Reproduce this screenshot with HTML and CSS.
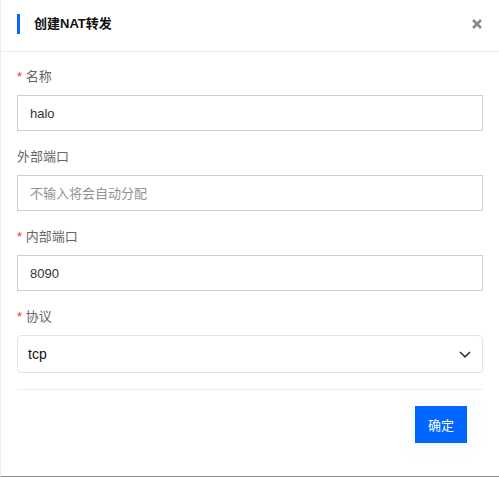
FILE: index.html
```html
<!DOCTYPE html>
<html lang="zh-CN">
<head>
<meta charset="utf-8">
<title>创建NAT转发</title>
<link rel="stylesheet" href="styles.css">
</head>
<body>
<div class="modal">
  <div class="modal-header">
    <h2 class="modal-title">创建NAT转发</h2>
    <button class="close" type="button" aria-label="关闭">
      <svg width="10" height="10" viewBox="0 0 10 10"><path d="M1 1L9 9M9 1L1 9" stroke="#8a8a8a" stroke-width="2.6" stroke-linecap="butt"/></svg>
    </button>
  </div>
  <form class="modal-body">
    <div class="field">
      <label class="label"><span class="req">*</span> 名称</label>
      <input class="input" type="text" value="halo">
    </div>
    <div class="field">
      <label class="label">外部端口</label>
      <input class="input" type="text" placeholder="不输入将会自动分配">
    </div>
    <div class="field">
      <label class="label"><span class="req">*</span> 内部端口</label>
      <input class="input" type="text" value="8090">
    </div>
    <div class="field">
      <label class="label"><span class="req">*</span> 协议</label>
      <div class="select">
        <span class="select-value">tcp</span>
        <svg class="chevron" width="12" height="7" viewBox="0 0 12 7"><path d="M1 1L6 5.8L11 1" fill="none" stroke="#333" stroke-width="1.6"/></svg>
      </div>
    </div>
    <div class="footer">
      <button class="btn-primary" type="button">确定</button>
    </div>
  </form>
</div>
</body>
</html>
```

FILE: styles.css
```css
* { box-sizing: border-box; }

html, body {
  margin: 0;
  padding: 0;
  background: #fff;
}

body {
  font-family: "Liberation Sans", "Noto Sans CJK SC", sans-serif;
  color: #333;
}

.modal {
  width: 499px;
  height: 477px;
  border-left: 1px solid #ececec;
  border-bottom: 1px solid #8c8c8c;
  background: #fff;
}

.modal-header {
  height: 52px;
  border-bottom: 1px solid #eeeeee;
  display: flex;
  align-items: center;
  justify-content: space-between;
  padding: 0 17px 3px 16px;
}

.modal-title {
  margin: 0;
  font-size: 13px;
  font-weight: bold;
  color: #111;
  border-left: 3px solid #0a66ff;
  padding-left: 14px;
  line-height: 20px;
  height: 20px;
}

.close {
  border: 0;
  background: none;
  padding: 0;
  width: 10px;
  height: 10px;
  display: flex;
  cursor: pointer;
}

.modal-body {
  padding: 15px 16px 0 16px;
  margin: 0;
}

.field {
  display: flex;
  flex-direction: column;
  gap: 8px;
  margin-bottom: 16px;
}

.label {
  font-size: 13px;
  line-height: 20px;
  height: 20px;
  color: #666;
}

.req {
  color: #f0302c;
}

.input {
  height: 36px;
  width: 100%;
  border: 1px solid #cfcfcf;
  border-radius: 0;
  padding: 0 12px;
  font-family: inherit;
  font-size: 13px;
  color: #333;
  background: #fff;
  outline: none;
}

.input::placeholder {
  color: #8e929a;
}

.select {
  height: 38px;
  border: 1px solid #e3e3e3;
  border-radius: 4px;
  display: flex;
  align-items: center;
  justify-content: space-between;
  padding: 0 11px 0 10px;
  font-size: 14px;
  color: #111;
}

.chevron {
  display: block;
}

.footer {
  border-top: 1px solid #eeeeee;
  padding-top: 16px;
  display: flex;
  justify-content: flex-end;
  padding-right: 16px;
}

.btn-primary {
  width: 52px;
  height: 37px;
  border: 0;
  border-radius: 0;
  background: #0066ff;
  color: #fff;
  font-family: inherit;
  font-size: 13px;
  cursor: pointer;
  box-shadow: 0 0 14px 6px rgba(0, 102, 255, 0.03);
}
```
